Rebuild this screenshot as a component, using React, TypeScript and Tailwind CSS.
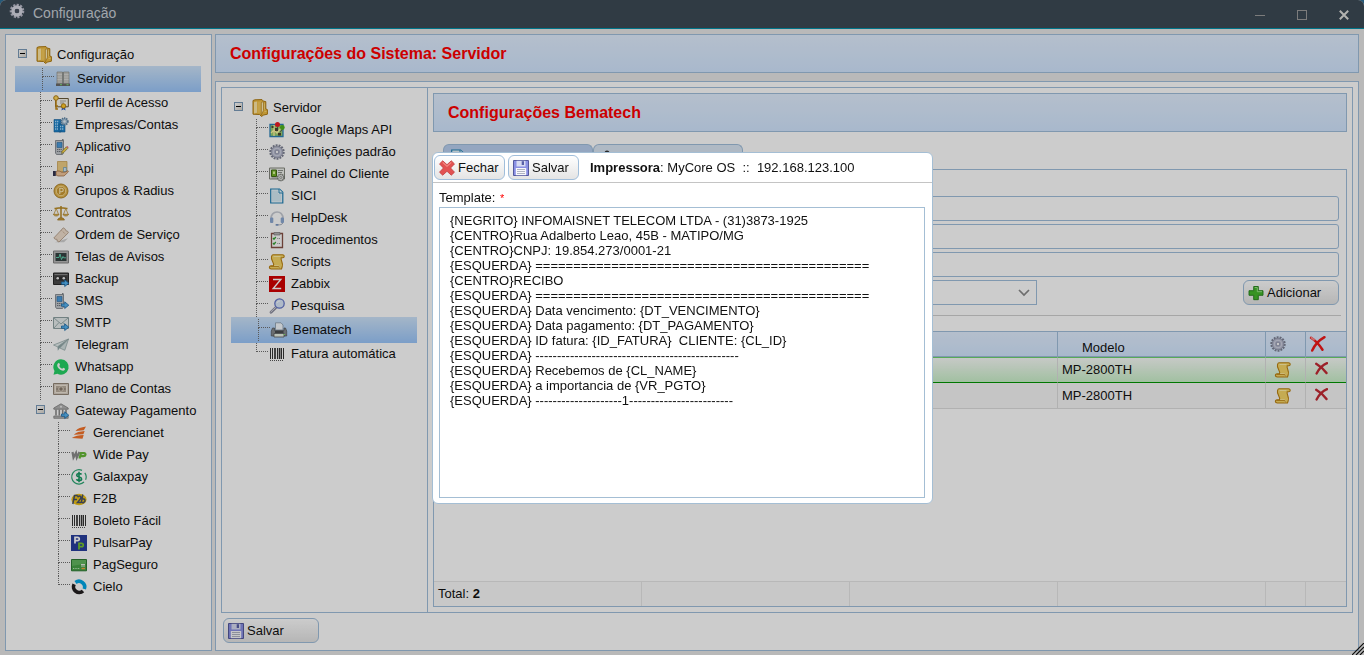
import type { ReactNode } from "react";

function Svg({ children }: { children: ReactNode }) {
  return (
    <svg viewBox="0 0 16 16" className="block h-4 w-4 shrink-0 overflow-visible" aria-hidden="true">
      {children}
    </svg>
  );
}

function Arrow() {
  return <path d="M8.5 11h3.2V8.8L15.8 12.2l-4.1 3.3v-2.2H8.5z" fill="#58b4f0" stroke="#1c6aa8" strokeWidth=".8" />;
}

function Gear() {
  return (
    <Svg>
      <circle cx="8" cy="8" r="6.700" fill="none" stroke="#7d8194" strokeWidth="2" strokeDasharray="1.900 1.100" />
      <circle cx="8" cy="8" r="5.800" fill="#b3b7cc" stroke="#85899c" strokeWidth=".7" />
      <circle cx="8" cy="8" r="3.800" fill="none" stroke="#d3d6e4" strokeWidth="1" />
      <circle cx="8" cy="8" r="2.300" fill="#9a9eb4" />
      <circle cx="8" cy="8" r="1.200" fill="#f7f7fa" />
    </Svg>
  );
}

function TitleGear() {
  return (
    <Svg>
      <circle cx="8" cy="8" r="6" fill="none" stroke="#b9bac9" strokeWidth="2.600" strokeDasharray="2.100 1.300" />
      <circle cx="8" cy="8" r="4" fill="none" stroke="#d8d9e4" strokeWidth="3.400" />
      <circle cx="8" cy="8" r="2.100" fill="#4b5362" />
    </Svg>
  );
}

function Folder() {
  return (
    <svg viewBox="0 0 16 18" className="block h-[18px] w-4 shrink-0" aria-hidden="true">
      <path d="M1 1.500 3 .8 10 .6l1.500 1.600 2.300.4v7.400l1.600.6v4.600l-3.700.8L9.500 17.400 7.500 15.500 1 15.200z" fill="#f0bd43" stroke="#b07c14" />
      <path d="M2 3.200 5 2.500v11.300l-3 .8z" fill="#ffe9a8" />
      <path d="M5.500 3 9 2.500v11l-3.500.8z" fill="#f5ca5a" />
      <path d="M9.300 3.500 11.500 2.500v8.800l-2.200 5z" fill="#fff0bb" stroke="#b98418" strokeWidth=".7" />
      <path d="M12.500 4.500v6M12.500 12.500h2" stroke="#fbd873" />
    </svg>
  );
}

function Servers() {
  return (
    <Svg>
      <path d="M2 1h5.500v12H2zM8.500 1H14v12H8.500z" fill="#c6c6c2" stroke="#8f8f89" strokeWidth=".7" />
      <path d="M2.500 3.500H7M2.500 6H7M9 3.500h4.500M9 6h4.500M2.500 8.500H7M9 8.500h4.500" stroke="#dededb" strokeWidth=".8" />
      <path d="M7.500 1h1v12h-1z" fill="#8a8a86" />
      <path d="M1 12.500h14V15H1z" fill="#6a6a68" />
      <path d="M5 13.700h2M11.500 13.700h2" stroke="#7ee07a" />
    </Svg>
  );
}

function Profile() {
  return (
    <Svg>
      <path d="M2.500 3.500h12.800v8.300H2.500z" fill="#fbf8ee" stroke="#6b5a3a" />
      <path d="M7 6h6M7 8h4" stroke="#a8a8a0" />
      <circle cx="3" cy="3" r="2.300" fill="#ffd95e" stroke="#b07a10" />
      <path d="M3 5v9h2M3 11h2" fill="none" stroke="#c48b17" strokeWidth="1.500" />
      <path d="m9 12-.5 3.500 2-1.200 2 1.200-.5-3.500z" fill="#2a62d8" />
      <circle cx="10.500" cy="11" r="2.300" fill="#ffc928" stroke="#a97408" strokeWidth=".8" />
    </Svg>
  );
}

function Company() {
  return (
    <Svg>
      <path d="M1 2.500h7V15H1zM6 7h6v8H6z" fill="#1f86cf" stroke="#17629a" strokeWidth=".6" />
      <path d="M2 4.500h4M2 7h3M2 9.500h3M2 12h3M7 9.500h4M7 12h4" stroke="#a9ddff" strokeWidth="1.300" strokeDasharray="1.300 .7" />
      <circle cx="11.500" cy="4.500" r="3.300" fill="#a8c4da" stroke="#6085a5" strokeWidth="1.800" strokeDasharray="1.300 .8" />
      <circle cx="11.500" cy="4.500" r="1.200" fill="#e8f1f8" />
    </Svg>
  );
}

function Phone({ mark }: { mark?: ReactNode }) {
  return (
    <Svg>
      <path d="M9 0h1.500v3H9z" fill="#85898e" />
      <path d="M2.500 1.500h8V14l-1 1.500h-6l-1-1.500z" fill="#c3c8cd" stroke="#777d84" strokeWidth=".8" />
      <path d="M4 3.500h5v5H4z" fill="#4b9bdc" stroke="#2f6d9f" strokeWidth=".6" />
      <path d="M4 10.500h5M4 12.500h5" stroke="#70767d" strokeDasharray="1.200 .6" />
      {mark}
    </Svg>
  );
}

function Pencil() {
  return (
    <>
      <path d="m8.500 14.500.6-2.300 4.200-4.400 1.500 1.500-4.200 4.400z" fill="#ffd94a" stroke="#7e7a40" strokeWidth=".7" />
      <path d="m13.300 7.800 1-.9 1.400 1.400-.9 1z" fill="#f06a78" />
    </>
  );
}

function Api() {
  return (
    <Svg>
      <path d="M4.500.5H14v10H4.500z" fill="#efcf85" stroke="#c79b48" strokeWidth=".7" />
      <path d="M10.500 6.500h2.800v4h-2.800z" fill="#d7ebf8" stroke="#4d90bd" strokeWidth=".6" />
      <path d="M3 10.500c2.500-1.200 4.500-.2 5.500.8h3.300l3.200-1.600c1 .5.200 1.500-.5 2L11 15H5l-2-1z" fill="#f2c79c" stroke="#a06a3c" strokeWidth=".7" />
      <path d="M0 10h2.800v5H0z" fill="#34344f" />
    </Svg>
  );
}

function Coin() {
  return (
    <Svg>
      <circle cx="8" cy="8" r="7" fill="#e3b650" stroke="#a87a1c" strokeWidth=".9" />
      <circle cx="8" cy="8" r="4.700" fill="#cc9a34" stroke="#fbe19b" strokeWidth=".9" />
      <path d="M6.800 11V5.300h1.700a1.700 1.700 0 0 1 0 3.500H7" fill="none" stroke="#fff0bd" strokeWidth="1.100" />
    </Svg>
  );
}

function Scales() {
  return (
    <Svg>
      <path d="M8 1v12M1.500 3.500c2 0 3-.8 6.500-.8s4.500.8 6.500.8" fill="none" stroke="#b98a22" strokeWidth="1.500" />
      <path d="m3.200 3.500-2.400 6M3.200 3.500l2.400 6M12.800 3.500l-2.400 6M12.800 3.500l2.400 6" stroke="#c4983a" strokeWidth=".8" />
      <path d="M.4 9.300H6c-.3 2.300-5.300 2.300-5.600 0zM10 9.300h5.600c-.3 2.300-5.300 2.300-5.600 0z" fill="#e2b754" stroke="#a67a1c" strokeWidth=".6" />
      <path d="M4.500 15h7l-1.500-2H6z" fill="#d9a83c" stroke="#9c6f15" strokeWidth=".7" />
    </Svg>
  );
}

function Ticket() {
  return (
    <Svg>
      <path d="M2 15.300h9l4-4z" fill="#d2d2d2" />
      <path d="M.8 11 10.300.8l2.200 1.600.6 1.500 1.500.3.800 1.500L6 15l-1.800-1-.3-1.700-1.700-.1z" fill="#f1dfcd" stroke="#ad9680" strokeWidth=".8" />
      <path d="m8.500 3.500 4.500 4" stroke="#c0a68c" strokeDasharray="1 1" />
    </Svg>
  );
}

function Monitor() {
  return (
    <Svg>
      <path d="M.5 2h15v12H.5z" fill="#bababa" stroke="#858585" />
      <path d="M2.500 4h11v8h-11z" fill="#364343" />
      <path d="M3 8.500h3L7 5l1.500 5.500L10 7.500l.7 1.300H13" fill="none" stroke="#64dcb8" strokeWidth=".9" />
    </Svg>
  );
}

function Backup() {
  return (
    <Svg>
      <path d="M.5 2h15v11.500H.5z" fill="#4b4b4b" stroke="#2b2b2b" />
      <path d="M1.500 3.500h13" stroke="#8a8a8a" />
      <path d="M2.500 5.500h11v4h-11z" fill="#333" />
      <circle cx="4.700" cy="7.300" r="1.300" fill="#eee" />
      <circle cx="10.800" cy="7.300" r="1.300" fill="#eee" />
      <Arrow />
    </Svg>
  );
}

function Mail() {
  return (
    <Svg>
      <path d="M.5 2.500h15v11H.5z" fill="#e6eded" stroke="#8fa2a3" />
      <path d="m1 3 7 6 7-6M1 13l5-5.500M15 13l-5-5.500" fill="none" stroke="#93a7a8" strokeWidth=".9" />
      <Arrow />
    </Svg>
  );
}

function Telegram() {
  return (
    <Svg>
      <path d="M15.500 2 .5 8l4 1.800z" fill="#e5eeee" stroke="#8ea3a3" strokeWidth=".7" />
      <path d="M15.500 2 4.500 9.800l.3 4 2-2.800z" fill="#91a8a9" />
      <path d="M15.500 2 6.800 11l5 2.300z" fill="#d5e1e1" stroke="#8ea3a3" strokeWidth=".7" />
    </Svg>
  );
}

function Whatsapp() {
  return (
    <Svg>
      <path d="M8 .3a7.700 7.700 0 1 1-3.600 14.500L.5 15.700l1-3.700A7.700 7.700 0 0 1 8 .3z" fill="#25d366" />
      <path d="M5.300 4.200c.7-.5 1.100-.2 1.700 1.600L6.300 7c.7 1.400 1.500 2.100 2.900 2.700l1.100-1c1.900.8 2 1 1.500 2-1 1.700-3.400 1.100-5.500-.7-2.100-1.900-2.900-4.600-1-5.800z" fill="#fff" />
    </Svg>
  );
}

function Money() {
  return (
    <Svg>
      <path d="M.5 2.500h15v11H.5z" fill="#d7cec2" stroke="#948878" />
      <path d="M2.500 4.500h11v7h-11z" fill="#b9ad9e" stroke="#fff7ea" strokeWidth=".7" />
      <circle cx="8" cy="8" r="2.200" fill="#8b7e6e" stroke="#efe5d8" strokeWidth=".7" />
      <path d="M3.500 8h1.200M11.300 8h1.200" stroke="#6d6256" />
    </Svg>
  );
}

function Bank() {
  return (
    <Svg>
      <path d="M.8 5 8 .8 15.200 5v1.200H.8z" fill="#b5b5b5" stroke="#808080" strokeWidth=".8" />
      <path d="M3 6.500v6M6.300 6.500v6M9.700 6.500v6M13 6.500v6" stroke="#8b8b8b" strokeWidth="1.600" />
      <path d="M.8 13h14.400v2.300H.8z" fill="#b5b5b5" stroke="#7b7b7b" strokeWidth=".7" />
      <circle cx="8" cy="3.800" r="1" fill="#eee" />
      <Arrow />
    </Svg>
  );
}

function Gerencianet() {
  return (
    <Svg>
      <path d="M15 1.500 12.800 5.200 4.500 6C6.500 3.500 10 2.300 15 1.500zM13.700 5.900l-1.300 3.300-9.600.6C5 7.200 8.800 6.300 13.700 5.900zM12.700 10l-1.200 3.800L.8 13c3-2 7-2.800 11.900-3z" fill="#f5742a" />
    </Svg>
  );
}

function WidePay() {
  return (
    <Svg>
      <path d="m1.500 5 1 5.500L5 6l.8 4.500L8.500 5" fill="none" stroke="#8c8c8c" strokeWidth="2.200" />
      <path d="m8.500 11.500 1.500-5.300h3c2.300 0 1.800 3-.6 3H9.800" fill="none" stroke="#67ba38" strokeWidth="2.200" />
    </Svg>
  );
}

function Galaxpay() {
  return (
    <Svg>
      <path d="M11 1.400A7.200 7.200 0 1 0 13 13M13.800 3.800A7.200 7.200 0 0 1 14.600 10.800" fill="none" stroke="#2fa876" strokeWidth="1.200" />
      <path d="M10.500 5.500C9.500 4 5.700 4.200 5.700 6.200c0 2.300 4.900 1.300 4.900 3.700 0 2.100-4 2.200-5.200.4M8 2.700v10.600" fill="none" stroke="#169a64" strokeWidth="1.600" />
    </Svg>
  );
}

function F2b() {
  return (
    <Svg>
      <ellipse cx="8" cy="8.500" rx="7.600" ry="5.700" fill="#f0c418" />
      <path d="M1.800 13 3.500 4.500h3.300M2.800 8.500H6M6.500 6.200c3-2.500 4.500 0 2.500 2.200L6.500 11.600H10M11.800 3.500l-1.400 7.700c3 2.200 5.800-3.700 1-3.400" fill="none" stroke="#46506a" strokeWidth="1.500" />
    </Svg>
  );
}

function Barcode() {
  return (
    <Svg>
      <path d="M1.500 2v11M3.500 2v11M8.500 2v11M12.500 2v11M14.500 2v11" stroke="#353535" strokeWidth="1" />
      <path d="M6 2v11M10.600 2v11" stroke="#353535" strokeWidth="1.700" />
      <path d="M1 14.500h14" stroke="#555" strokeDasharray="1 1" />
    </Svg>
  );
}

function Pulsar() {
  return (
    <Svg>
      <path d="M0 0h16v16H0z" fill="#283f9e" />
      <path d="M4 8.500V2.300h2.500c2.400 0 2.400 3.400 0 3.400H4.500" fill="none" stroke="#fff" strokeWidth="1.700" />
      <path d="M8 14.500V8.300h2.500c2.400 0 2.400 3.400 0 3.400H8.500" fill="none" stroke="#77c62d" strokeWidth="1.700" />
    </Svg>
  );
}

function Card() {
  return (
    <Svg>
      <path d="M.5 2.500h15v11.300H.5z" fill="#48a348" stroke="#2d7a32" />
      <path d="M1 3h14v3.500L1 9z" fill="#74c472" opacity=".6" />
      <path d="M2 11.500h7" stroke="#bde9bb" strokeDasharray="1 .7" />
      <path d="M10 7.500h4M10 9h4" stroke="#e8eee4" />
      <path d="M10.500 11.500H14" stroke="#f3a640" strokeWidth="1.400" />
    </Svg>
  );
}

function Cielo() {
  return (
    <Svg>
      <path d="M4.500 3.500A5.700 5.700 0 0 1 13.300 10" fill="none" stroke="#00a8e8" strokeWidth="3.600" />
      <path d="M3.100 5.200A5.700 5.700 0 0 0 12 12" fill="none" stroke="#221f20" strokeWidth="3.600" />
    </Svg>
  );
}

function Maps() {
  return (
    <Svg>
      <path d="M1 2.500h13v12H1z" fill="#9cd070" stroke="#2d83b8" strokeWidth="1.300" />
      <path d="m2 11 3-3 3 3 4-5M5 3v11" fill="none" stroke="#fff3a5" strokeWidth="1.300" />
      <path d="M6 6h3v3H6zM2.500 4h2v2h-2zM9 11h3v2.500H9z" fill="#50462c" />
      <path d="M13.500 7 11 10.500M8.500 5v4" stroke="#444" strokeWidth=".8" />
      <circle cx="8.500" cy="2.500" r="2.500" fill="#ed1c24" />
      <circle cx="13.300" cy="5.500" r="2.400" fill="#51b51c" />
    </Svg>
  );
}

function Client() {
  return (
    <Svg>
      <path d="M.5 2h15v11H.5z" fill="#eef0ec" stroke="#85887f" />
      <path d="M2.500 4h5v6.500h-5z" fill="#75b527" stroke="#456c16" />
      <path d="M4 5.500h2V8H4z" fill="#dcf4a0" />
      <path d="M9 4.500h5M9 6.500h4M2.500 12H8" stroke="#8e918b" />
      <circle cx="11.800" cy="11.500" r="3.200" fill="#dededc" stroke="#777b74" strokeWidth="1.300" strokeDasharray="1.500 .5" />
      <circle cx="11.800" cy="11.500" r="1" fill="#fff" stroke="#777b74" strokeWidth=".7" />
    </Svg>
  );
}

function Doc() {
  return (
    <Svg>
      <path d="M1.700 1h8.800l3.300 3.300V15H1.700z" fill="#f4fbff" stroke="#2181b5" strokeWidth="1.200" />
      <path d="M3 2.500h6v3.300h3.300v7.700H3z" fill="#d5ebf6" />
      <path d="M10 1v4h4" fill="#eefaff" stroke="#2181b5" />
    </Svg>
  );
}

function Headset() {
  return (
    <Svg>
      <path d="M2.200 9C1 .2 14.800-.8 13.900 9" fill="none" stroke="#c7cbd4" strokeWidth="1.700" />
      <rect x="1" y="7.500" width="3.300" height="5.500" rx="1" fill="#8da9d3" />
      <rect x="11.700" y="7.500" width="3.300" height="5.500" rx="1" fill="#8da9d3" />
      <path d="M13.800 13c-.8 1.700-2.500 1.900-5 1.900" fill="none" stroke="#a6adba" />
      <rect x="6.500" y="14" width="3" height="1.700" rx=".8" fill="#7c98c5" />
    </Svg>
  );
}

function Clipboard() {
  return (
    <Svg>
      <path d="M2.500 1.500h11v14h-11z" fill="#fdfdfd" stroke="#865045" strokeWidth="1.300" />
      <path d="M5 .5h6v2.500H5z" fill="#b4b4b4" stroke="#7d7d7d" strokeWidth=".7" />
      <path d="m4 6 1 1.200L6.800 5M4 11l1 1.200L6.800 10" fill="none" stroke="#37a336" strokeWidth="1.300" />
      <path d="M8.300 6.500H11M8.300 11.500H11" stroke="#999" strokeDasharray="1 .7" />
    </Svg>
  );
}

function Scroll() {
  return (
    <Svg>
      <path d="M4 .8h9.500c2.500 0 2 3 .3 3h-1.600c-1 2.500 2.600 5.500 1 9L12.500 15H2.300C-.2 15-.2 11.800 2 11.800h2.700c.8-3-3.200-6-2.200-9.200.3-1 .8-1.800 1.500-1.800z" fill="#f7d667" stroke="#bb8212" strokeWidth="1.100" />
      <path d="M4.500 2.500h7M5 11.800h4c1.700 0 1.500 2.700 0 2.700" fill="none" stroke="#fff0ab" />
      <path d="M1.500 12.500h8.300c.6.700.3 1.800-.4 2.200" fill="none" stroke="#bb8212" strokeWidth=".8" />
    </Svg>
  );
}

function Zabbix() {
  return (
    <Svg>
      <path d="M0 0h16v16H0z" fill="#d40000" />
      <path d="M4 3.500h7.800L4.200 12.500h8" fill="none" stroke="#fff" strokeWidth="1.400" />
    </Svg>
  );
}

function Search() {
  return (
    <Svg>
      <path d="M6.700 9.700 2 14.300" stroke="#8e8fa0" strokeWidth="2.800" strokeLinecap="round" />
      <path d="M6.500 9.500 2 13.800" stroke="#d9dae3" strokeLinecap="round" />
      <circle cx="10.500" cy="5.500" r="4.700" fill="#dbe9fb" stroke="#6476c8" strokeWidth="1.300" />
      <path d="M8 5a2.600 2.600 0 0 1 3-2" fill="none" stroke="#fff" />
    </Svg>
  );
}

function Printer() {
  return (
    <Svg>
      <path d="M4.500.8H10L12 3v5H4.500z" fill="#f5fbff" stroke="#8798a8" strokeWidth=".8" />
      <path d="M1.500 6h2v2.500H13V6h1.500l1.200 3v5H.3V9z" fill="#85898d" stroke="#505356" strokeWidth=".7" />
      <path d="M3 11.500h10V15H3z" fill="#e9f2e7" stroke="#55585b" strokeWidth=".8" />
      <path d="M4 10h8.500" stroke="#303235" strokeWidth="1.400" />
      <path d="M12.500 12.500h1.500" stroke="#84df70" />
    </Svg>
  );
}

function Floppy() {
  return (
    <Svg>
      <path d="M.5.500h15v15H.5z" fill="#8a90e4" stroke="#54599e" />
      <path d="M3.500.8h9v5.700h-9z" fill="#d7dbf2" />
      <path d="M8.700 1.200h2.300V5H8.700z" fill="#5860a9" />
      <path d="M2.800 8h10.400v7.200H2.800z" fill="#f8f8fc" />
      <path d="M4 9.500h8M4 11.500h8M4 13.500h8" stroke="#b0b4c2" strokeWidth="1" />
    </Svg>
  );
}

function CloseMark() {
  return (
    <Svg>
      <path d="M3.700.8 8 4.700 12.300.8 15.500 3.900 11.600 8l3.900 4.200-3.200 3L8 11.300l-4.300 3.900-3.200-3L4.400 8 .5 3.900z" fill="#e25252" stroke="#c03c3c" strokeWidth=".8" strokeLinejoin="round" />
      <path d="m3.700 2.300 4.300 4 4.300-4" fill="none" stroke="#f58d86" strokeWidth="1.100" />
    </Svg>
  );
}

function Plus() {
  return (
    <Svg>
      <path d="M5.700 1.500h4.600v4.200h4.700v4.600h-4.700v4.400H5.700v-4.400H1V5.700h4.700z" fill="#45b82e" stroke="#23801a" strokeWidth=".9" strokeLinejoin="round" />
      <path d="M6.700 2.500h2.600v4.200H14" fill="none" stroke="#9ce489" />
    </Svg>
  );
}

function RedCross() {
  return (
    <Svg>
      <path d="M1 1.800c4 2.500 8 6.500 11.500 11.900M14.500 1.200C9.500 4 5 8.500 2.200 14.500" fill="none" stroke="#f01818" strokeWidth="2.500" strokeLinecap="round" />
      <path d="m1.500 1.700 2.500 2" stroke="#ff8d8d" strokeWidth="1.800" strokeLinecap="round" />
    </Svg>
  );
}

function SmallCross() {
  return (
    <svg viewBox="0 0 13 13" className="block h-[13px] w-[13px]" aria-hidden="true">
      <path d="M1.200 1.800c3.300 2 7 4.800 10.300 9.200M12 1.200C8.200 2.700 4.200 6.500 1.600 11.500" fill="none" stroke="#c42a34" strokeWidth="2.400" strokeLinecap="round" />
    </svg>
  );
}

type Item = { label: string; icon: ReactNode; selected?: boolean };

const systemItems: Item[] = [
  { label: "Servidor", icon: <Servers />, selected: true },
  { label: "Perfil de Acesso", icon: <Profile /> },
  { label: "Empresas/Contas", icon: <Company /> },
  { label: "Aplicativo", icon: <Phone mark={<Pencil />} /> },
  { label: "Api", icon: <Api /> },
  { label: "Grupos & Radius", icon: <Coin /> },
  { label: "Contratos", icon: <Scales /> },
  { label: "Ordem de Serviço", icon: <Ticket /> },
  { label: "Telas de Avisos", icon: <Monitor /> },
  { label: "Backup", icon: <Backup /> },
  { label: "SMS", icon: <Phone mark={<Arrow />} /> },
  { label: "SMTP", icon: <Mail /> },
  { label: "Telegram", icon: <Telegram /> },
  { label: "Whatsapp", icon: <Whatsapp /> },
  { label: "Plano de Contas", icon: <Money /> },
];

const gatewayItems: Item[] = [
  { label: "Gerencianet", icon: <Gerencianet /> },
  { label: "Wide Pay", icon: <WidePay /> },
  { label: "Galaxpay", icon: <Galaxpay /> },
  { label: "F2B", icon: <F2b /> },
  { label: "Boleto Fácil", icon: <Barcode /> },
  { label: "PulsarPay", icon: <Pulsar /> },
  { label: "PagSeguro", icon: <Card /> },
  { label: "Cielo", icon: <Cielo /> },
];

const serverItems: Item[] = [
  { label: "Google Maps API", icon: <Maps /> },
  { label: "Definições padrão", icon: <Gear /> },
  { label: "Painel do Cliente", icon: <Client /> },
  { label: "SICI", icon: <Doc /> },
  { label: "HelpDesk", icon: <Headset /> },
  { label: "Procedimentos", icon: <Clipboard /> },
  { label: "Scripts", icon: <Scroll /> },
  { label: "Zabbix", icon: <Zabbix /> },
  { label: "Pesquisa", icon: <Search /> },
  { label: "Bematech", icon: <Printer />, selected: true },
  { label: "Fatura automática", icon: <Barcode /> },
];

function Toggle({ label }: { label: string }) {
  return (
    <button
      type="button"
      aria-label={label}
      aria-expanded="true"
      className="mb-[3px] flex h-[9px] w-[9px] shrink-0 items-center justify-center border border-[#7c9cba] bg-linear-to-br from-white to-[#d8d4cc]"
    >
      <span className="h-px w-[5px] bg-black" />
    </button>
  );
}

function Guide({ last }: { last?: boolean }) {
  return (
    <span className="flex w-[13px] shrink-0 flex-col self-stretch">
      <span className="h-[9px] w-3 border-b border-l border-dotted border-[#707070]" />
      {last ? null : <span className="flex-1 border-l border-dotted border-[#707070]" />}
    </span>
  );
}

function TreeRow({ item, deep, last }: { item: Item; deep?: boolean; last?: boolean }) {
  return (
    <li>
      <a
        href="#"
        className={
          item.selected
            ? "flex h-[26px] items-center border-2 border-transparent bg-linear-to-b from-[#cee4fa] to-[#9bc6fa] bg-origin-border pl-[25px]"
            : deep
              ? "flex h-[22px] items-center pl-[43px]"
              : "flex h-[22px] items-center pl-[25px]"
        }
      >
        <Guide last={last} />
        {item.icon}
        <span className="ml-1.5 whitespace-nowrap">{item.label}</span>
      </a>
    </li>
  );
}

function TreeRoot({ label }: { label: string }) {
  return (
    <div className="flex h-[22px] items-center pl-[3px]">
      <Toggle label={label} />
      <span className="ml-[9px]">
        <Folder />
      </span>
      <span className="ml-[5px]">{label}</span>
    </div>
  );
}

function Heading({ children }: { children: ReactNode }) {
  return (
    <h2 className="flex h-[39px] shrink-0 items-center border border-[#a0bedb] bg-linear-to-b from-[#e2efff] to-[#d3e7ff] px-3.5 text-base font-bold text-[#ff0000]">
      {children}
    </h2>
  );
}

function Button({ icon, children, wide }: { icon: ReactNode; children: ReactNode; wide?: boolean }) {
  return (
    <button
      type="button"
      className={
        wide
          ? "flex h-[25px] w-24 shrink-0 items-center gap-[3px] rounded-md border border-[#a0bedb] bg-linear-to-b from-white to-[#e4e4e4] px-1"
          : "flex h-[25px] min-w-[71px] shrink-0 items-center gap-[3px] rounded-md border border-[#a0bedb] bg-linear-to-b from-white to-[#e4e4e4] px-1"
      }
    >
      {icon}
      <span>{children}</span>
    </button>
  );
}

function Columns() {
  return (
    <colgroup>
      <col />
      <col className="w-[208px]" />
      <col className="w-[208px]" />
      <col className="w-[208px]" />
      <col className="w-10" />
      <col className="w-10" />
    </colgroup>
  );
}

function PrinterTable() {
  const th = "border-r border-[#a0bedb] p-0 font-normal";
  const td = "border-r border-[#dedede] p-0";
  return (
    <table className="w-full table-fixed border-separate border-spacing-0">
      <Columns />
      <thead>
        <tr className="h-[26px] bg-linear-to-b from-[#e2efff] to-[#d3e7ff] [&>th]:border-y [&>th]:border-y-[#a0bedb]">
          <th className={th} />
          <th className={th} />
          <th className={th} />
          <th className="border-r border-[#a0bedb] pt-2 pl-6 text-left leading-4 font-normal">Modelo</th>
          <th className={th}>
            <span className="block pl-1">
              <Gear />
            </span>
          </th>
          <th className="p-0">
            <span className="block pl-1">
              <RedCross />
            </span>
          </th>
        </tr>
      </thead>
      <tbody>
        {["MP-2800TH", "MP-2800TH"].map((model, i) => (
          <tr
            key={i}
            className={
              i === 0
                ? "h-[26px] bg-linear-to-b from-[#fafcfa] to-[#c8f0c8] [&>td]:border-t [&>td]:border-b [&>td]:border-t-[#6fd46f] [&>td]:border-b-[#009600]"
                : "h-[26px] bg-[#f7f7f7] [&>td]:border-b [&>td]:border-b-[#dedede]"
            }
          >
            <td className={td} />
            <td className={td} />
            <td className={td} />
            <td className="border-r border-[#dedede] py-0 pl-1">{model}</td>
            <td className={td}>
              <button type="button" aria-label="Scripts" className="block pl-[9px]">
                <Scroll />
              </button>
            </td>
            <td className="p-0">
              <button type="button" aria-label="Fechar" className="block pb-[3px] pl-[9px]">
                <SmallCross />
              </button>
            </td>
          </tr>
        ))}
      </tbody>
    </table>
  );
}

const template = [
  "{NEGRITO} INFOMAISNET TELECOM LTDA - (31)3873-1925",
  "{CENTRO}Rua Adalberto Leao, 45B - MATIPO/MG",
  "{CENTRO}CNPJ: 19.854.273/0001-21",
  "{ESQUERDA} ============================================",
  "{CENTRO}RECIBO",
  "{ESQUERDA} ============================================",
  "{ESQUERDA} Data vencimento: {DT_VENCIMENTO}",
  "{ESQUERDA} Data pagamento: {DT_PAGAMENTO}",
  "{ESQUERDA} ID fatura: {ID_FATURA}  CLIENTE: {CL_ID}",
  "{ESQUERDA} -----------------------------------------------",
  "{ESQUERDA} Recebemos de {CL_NAME}",
  "{ESQUERDA} a importancia de {VR_PGTO}",
  "{ESQUERDA} --------------------1------------------------",
].join("\n");

function TemplateDialog() {
  return (
    <div className="fixed inset-0 flex items-center justify-center bg-black/20 pt-px pl-px">
      <section
        role="dialog"
        aria-labelledby="dialog-title"
        className="flex h-[352px] w-[501px] flex-col rounded-md border border-[#a4bed4] bg-white"
      >
        <header className="flex items-center gap-[3px] border-b border-[#c4c4c4] px-px py-0.5">
          <Button icon={<CloseMark />}>Fechar</Button>
          <Button icon={<Floppy />}>Salvar</Button>
          <p id="dialog-title" className="ml-2 whitespace-pre">
            <b>Impressora</b>: MyCore OS  ::  192.168.123.100
          </p>
        </header>
        <div className="flex flex-1 flex-col pr-[7px] pb-[5px] pl-1.5">
          <label htmlFor="template" className="pt-1.5 leading-[18px]">
            Template: <span className="pl-px text-[11px] text-[#ff0000]">*</span>
          </label>
          <textarea
            id="template"
            defaultValue={template}
            spellCheck={false}
            className="block w-full flex-1 resize-none border border-[#a4bed4] px-2.5 py-[5px] leading-[15px] outline-none"
          />
        </div>
      </section>
    </div>
  );
}

export default function App() {
  const input = "h-[25px] w-full rounded-[3px] border border-[#a0bedb] bg-white px-2 outline-none";
  return (
    <div className="h-screen bg-[#2d6f96] font-['Liberation_Sans',Arial,sans-serif] text-[13px] leading-4 text-[#111]">
      <div className="flex h-full flex-col overflow-hidden rounded-t-md bg-[#e8e8e8]">
        <header className="flex h-[29px] shrink-0 items-center border-b border-[#0092ab] bg-[#3d4a56] pr-[15px] pb-0.5 pl-[9px]">
          <span className="mb-1">
            <TitleGear />
          </span>
          <h1 className="ml-2 flex-1 text-sm text-[#c9d0d6]">Configuração</h1>
          <div className="flex items-center gap-8">
            <button type="button" aria-label="Minimizar" className="mt-1 flex h-2.5 w-2.5 items-center">
              <span className="block h-px w-full bg-[#9b9b9b]" />
            </button>
            <button type="button" aria-label="Maximizar" className="mt-1 h-2.5 w-2.5 border border-[#9b9b9b]" />
            <button type="button" aria-label="Fechar" className="mt-1 h-2.5 w-2.5">
              <svg viewBox="0 0 10 10" className="block h-2.5 w-2.5" aria-hidden="true">
                <path d="m.8.8 8.400 8.400M9.200.8.8 9.200" stroke="#e0e0dc" strokeWidth="2" />
              </svg>
            </button>
          </div>
        </header>

        <div className="flex min-h-0 flex-1 gap-[3px] px-[5px] pt-[5px] pb-1">
          <nav className="w-[207px] shrink-0 border border-[#a0bedb] bg-white pt-[9px] pr-2.5 pl-[9px]">
            <TreeRoot label="Configuração" />
            <ul>
              {systemItems.map((item) => (
                <TreeRow key={item.label} item={item} />
              ))}
              <li>
                <div className="flex h-[22px] items-center pl-[21px]">
                  <Toggle label="Gateway Pagamento" />
                  <span className="ml-2">
                    <Bank />
                  </span>
                  <span className="ml-1.5 whitespace-nowrap">Gateway Pagamento</span>
                </div>
                <ul>
                  {gatewayItems.map((item, i) => (
                    <TreeRow key={item.label} item={item} deep last={i === gatewayItems.length - 1} />
                  ))}
                </ul>
              </li>
            </ul>
          </nav>

          <main className="flex min-w-0 flex-1 flex-col gap-2">
            <Heading>Configurações do Sistema: Servidor</Heading>
            <div className="flex min-h-0 flex-1 flex-col border border-[#a0bedb] bg-white px-[5px] pt-[5px] pb-[7px]">
              <div className="flex min-h-0 flex-1 border border-[#a0bedb]">
                <nav className="w-[206px] shrink-0 border-r border-[#a0bedb] pt-[9px] pr-2.5 pl-[9px]">
                  <TreeRoot label="Servidor" />
                  <ul>
                    {serverItems.map((item, i) => (
                      <TreeRow key={item.label} item={item} last={i === serverItems.length - 1} />
                    ))}
                  </ul>
                </nav>

                <section className="flex min-w-0 flex-1 flex-col p-[5px]">
                  <Heading>Configurações Bematech</Heading>
                  <div className="mt-3 flex h-[25px] px-2.5">
                    <button type="button" aria-label="Bematech" className="w-[150px] rounded-t-md border border-b-0 border-[#a0bedb] bg-[#b9d0f0] px-1.5">
                      <Doc />
                    </button>
                    <button type="button" aria-label="Configuração" className="w-[150px] rounded-t-md border border-b-0 border-[#a0bedb] bg-[#dbe8f6] px-1.5">
                      <Svg>
                        <circle cx="7" cy="4" r="2.500" fill="#333" />
                      </Svg>
                    </button>
                  </div>
                  <div className="flex min-h-0 flex-1 flex-col border border-[#a0bedb]">
                    <form className="flex flex-col gap-[3px] pt-[26px] pr-[7px] pl-2.5">
                      <input aria-label="Nome" className={input} />
                      <input aria-label="IP" className={input} />
                      <input aria-label="Porta" className={input} />
                      <div className="flex items-center justify-between">
                        <div className="grid w-2/3 max-w-[593px] items-center">
                          <select
                            aria-label="Modelo"
                            className="col-start-1 row-start-1 h-[25px] w-full appearance-none border border-[#a0bedb] bg-white px-2 outline-none"
                          >
                            <option />
                          </select>
                          <svg viewBox="0 0 12 8" className="pointer-events-none col-start-1 row-start-1 mr-[7px] h-2 w-3 justify-self-end" aria-hidden="true">
                            <path d="m1 1 5 5 5-5" fill="none" stroke="#8a8a8a" strokeWidth="1.700" />
                          </svg>
                        </div>
                        <Button wide icon={<Plus />}>
                          Adicionar
                        </Button>
                      </div>
                    </form>
                    <hr className="mt-2.5 mr-[5px] mb-[15px] ml-2.5 border-[#d0d0d0]" />
                    <PrinterTable />
                    <div className="flex-1" />
                    <table className="w-full table-fixed border-separate border-spacing-0">
                      <Columns />
                      <tbody>
                        <tr className="h-[25px] bg-[#fafafa] [&>td]:border-t [&>td]:border-[#e6e6e6] [&>td:not(:last-child)]:border-r">
                          <td className="py-0 pl-1">
                            Total: <b>2</b>
                          </td>
                          <td />
                          <td />
                          <td />
                          <td />
                          <td />
                        </tr>
                      </tbody>
                    </table>
                  </div>
                </section>
              </div>
              <div className="mt-[5px] ml-0.5">
                <Button wide icon={<Floppy />}>
                  Salvar
                </Button>
              </div>
            </div>
          </main>
        </div>
      </div>
      <svg viewBox="0 0 12 12" className="absolute right-0 bottom-0 h-3 w-3" aria-hidden="true">
        <path d="M0 12 12 0M4 12l8-8M8 12l4-4" stroke="#111" strokeWidth="1.200" />
      </svg>
      <TemplateDialog />
    </div>
  );
}
